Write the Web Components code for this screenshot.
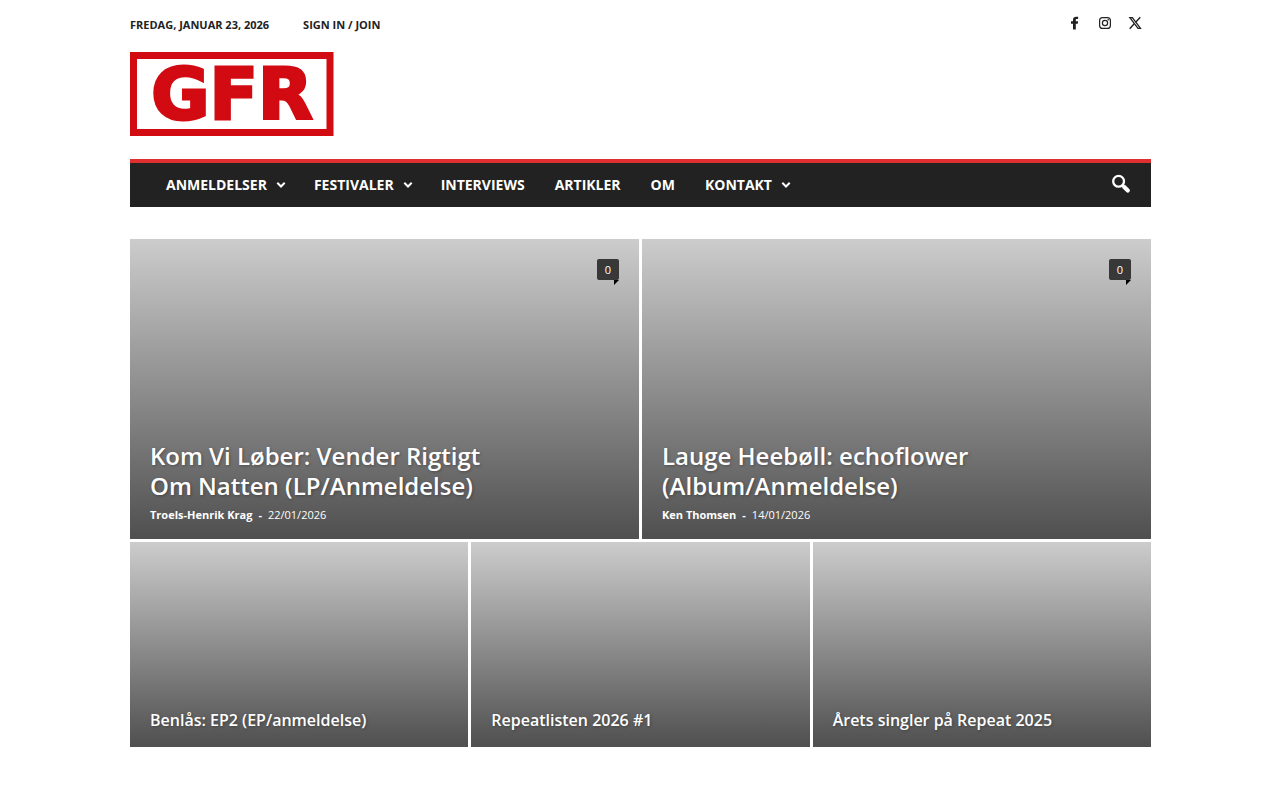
<!DOCTYPE html>
<html lang="da">
<head>
<meta charset="utf-8">
<meta name="viewport" content="width=device-width, initial-scale=1">
<title>GFR</title>
<style>
  body {
    margin: 0;
    background: #fff;
    color: #222;
    font-family: "Open Sans", "Noto Sans", sans-serif;
  }
</style>
</head>
<body>
<gfr-page>
  <gfr-topbar slot="header" date="Fredag, januar 23, 2026"></gfr-topbar>
  <gfr-logo slot="header"></gfr-logo>
  <gfr-nav slot="header">
    <gfr-nav-item sub>Anmeldelser</gfr-nav-item>
    <gfr-nav-item sub>Festivaler</gfr-nav-item>
    <gfr-nav-item>Interviews</gfr-nav-item>
    <gfr-nav-item>Artikler</gfr-nav-item>
    <gfr-nav-item>Om</gfr-nav-item>
    <gfr-nav-item sub>Kontakt</gfr-nav-item>
  </gfr-nav>
  <gfr-grid>
    <gfr-story large comments="0" author="Troels-Henrik Krag" date="22/01/2026">Kom Vi Løber: Vender Rigtigt Om Natten (LP/Anmeldelse)</gfr-story>
    <gfr-story large comments="0" author="Ken Thomsen" date="14/01/2026">Lauge Heebøll: echoflower (Album/Anmeldelse)</gfr-story>
    <gfr-story>Benlås: EP2 (EP/anmeldelse)</gfr-story>
    <gfr-story>Repeatlisten 2026 #1</gfr-story>
    <gfr-story>Årets singler på Repeat 2025</gfr-story>
  </gfr-grid>
</gfr-page>

<script>
// Small base class: every element renders one open shadow root
class GfrElement extends HTMLElement {
  constructor() {
    super();
    this.attachShadow({ mode: 'open' });
  }

  connectedCallback() {
    this.shadowRoot.innerHTML = this.render();
  }
}

class GfrPage extends GfrElement {
  render() {
    return `
      <style>
        :host {
          display: block;
          max-width: 1021px;
          margin: 0 auto;
          padding-left: 1px;
        }
        main { padding: 32px 0 48px; }
      </style>
      <header><slot name="header"></slot></header>
      <main><slot></slot></main>
    `;
  }
}

class GfrTopbar extends GfrElement {
  render() {
    return `
      <style>
        :host {
          display: flex;
          justify-content: space-between;
          align-items: center;
          height: 48px;
          font-size: 11px;
          font-weight: 700;
          line-height: 20px;
          text-transform: uppercase;
        }
        a { color: #222; text-decoration: none; }
        .info { display: flex; gap: 34px; padding-top: 2px; }
        .social { display: flex; gap: 10px; padding: 0 6px 2px 0; }
        .social a { display: block; width: 20px; height: 20px; }
        svg { display: block; width: 20px; height: 20px; }
      </style>
      <div class="info">
        <span>${this.getAttribute('date')}</span>
        <a href="#login">Sign in / Join</a>
      </div>
      <nav class="social" aria-label="Social">
        <a href="#facebook" aria-label="Facebook">
          <svg viewBox="0 0 20 20" fill="#222"><path d="M8 16.500V10.800H6V8.200h2V6.700C8 4.700 9.200 3.700 11.200 3.700c.8 0 1.500.1 1.900.1V6.100H11.900c-.9 0-1.100.4-1.100 1v1.100h2.300l-.3 2.600h-2v5.700z"/></svg>
        </a>
        <a href="#instagram" aria-label="Instagram">
          <svg viewBox="0 0 20 20" fill="none" stroke="#222" stroke-width="1.200"><rect x="4.600" y="4.600" width="10.800" height="10.800" rx="3"/><circle cx="10" cy="10" r="2.600"/><circle cx="13.200" cy="6.800" r=".8" fill="#222" stroke="none"/></svg>
        </a>
        <a href="#x" aria-label="X">
          <svg viewBox="0 0 20 20" fill="none" stroke="#222"><path d="M4.900 4.600h2.500l8.100 10.800h-2.500z" stroke-width="1.300"/><path d="M15.300 4.200l-4.700 5M9.200 10.800L4.700 15.800" stroke-width="1.400"/></svg>
        </a>
      </nav>
    `;
  }
}

class GfrLogo extends GfrElement {
  render() {
    return `
      <style>
        :host { display: block; padding: 4px 0 23px; }
        a { display: block; width: 204px; }
        svg { display: block; width: 204px; height: 84px; }
        text { font: 700 71px "DejaVu Sans", sans-serif; }
      </style>
      <a href="#home" aria-label="GFR">
        <svg viewBox="0 0 204 84">
          <rect x="3.500" y="3.500" width="196.500" height="77" fill="#fff" stroke="#d20a11" stroke-width="7"/>
          <text x="102" y="67" text-anchor="middle" fill="#d20a11" stroke="#d20a11" stroke-width="3">GFR</text>
        </svg>
      </a>
    `;
  }
}

class GfrNav extends GfrElement {
  render() {
    return `
      <style>
        :host {
          display: flex;
          justify-content: space-between;
          border-top: 4px solid #de3030;
          background: #222;
          padding: 0 10px 0 21px;
        }
        nav { display: flex; flex-wrap: wrap; }
        button {
          width: 40px;
          height: 42px;
          padding: 0 10px;
          border: 0;
          background: none;
          cursor: pointer;
        }
        svg { display: block; width: 20px; height: 20px; }
      </style>
      <nav aria-label="Menu"><slot></slot></nav>
      <button type="button" aria-label="Search">
        <svg viewBox="0 0 20 20" fill="none" stroke="#fff"><circle cx="7.600" cy="7.300" r="5.400" stroke-width="2.300"/><path d="M11.300 11l1.700 1.700" stroke-width="2.500"/><path d="M13.200 12.900l3.600 3.600" stroke-width="4.200" stroke-linecap="round"/></svg>
      </button>
    `;
  }
}

class GfrNavItem extends GfrElement {
  render() {
    const arrow = this.hasAttribute('sub')
      ? '<svg viewBox="0 0 10 10"><path d="M1.300 2.800L5 6.500l3.700-3.700" fill="none" stroke="#fff" stroke-width="2"/></svg>'
      : '';

    return `
      <style>
        :host { display: block; }
        a {
          display: flex;
          align-items: center;
          gap: 9px;
          padding: 0 15px;
          color: #fff;
          font-size: 14px;
          font-weight: 700;
          line-height: 44px;
          text-decoration: none;
          text-transform: uppercase;
        }
        :host([sub]) a { padding-right: 13px; }
        svg { width: 10px; height: 10px; }
      </style>
      <a href="#menu"><slot></slot>${arrow}</a>
    `;
  }
}

class GfrGrid extends GfrElement {
  render() {
    return `
      <style>
        :host {
          display: grid;
          grid-template-columns: repeat(6, 1fr);
          gap: 3px;
        }
        ::slotted(*) { grid-column: span 2; }
        ::slotted([large]) { grid-column: span 3; }
      </style>
      <slot></slot>
    `;
  }
}

class GfrStory extends GfrElement {
  render() {
    const author = this.getAttribute('author');
    const comments = this.getAttribute('comments');

    return `
      <style>
        :host {
          position: relative;
          display: flex;
          flex-direction: column;
          justify-content: flex-end;
          box-sizing: border-box;
          min-height: 205px;
          padding: 0 20px 14px;
          background: linear-gradient(to bottom, rgba(0,0,0,0.2), rgba(0,0,0,0.69));
          color: #fff;
        }
        :host([large]) { min-height: 300px; }
        a { color: inherit; text-decoration: none; }
        h3 {
          margin: 0;
          max-width: 375px;
          font-size: 16px;
          font-weight: 600;
          line-height: 26px;
          text-shadow: 1px 1px 3px rgba(0,0,0,0.3);
        }
        :host([large]) h3 { font-size: 24px; line-height: 30px; }
        .meta {
          display: flex;
          gap: 6px;
          padding-top: 4px;
          font-size: 11px;
          line-height: 20px;
        }
        .meta a, .meta span { font-weight: 700; }

        /* comment count bubble */
        .comments {
          position: absolute;
          top: 20px;
          right: 20px;
          min-width: 22px;
          border-radius: 2px;
          background: #383838;
          font-size: 11px;
          line-height: 21px;
          text-align: center;
        }
        .comments::after {
          content: "";
          position: absolute;
          top: 100%;
          right: 0;
          border-top: 5px solid #000;
          border-right: 5px solid transparent;
        }
      </style>
      ${comments !== null ? `<a class="comments" href="#comments">${comments}</a>` : ''}
      <h3><a href="#story"><slot></slot></a></h3>
      ${author ? `<div class="meta"><a href="#author">${author}</a><span>-</span><time>${this.getAttribute('date')}</time></div>` : ''}
    `;
  }
}

customElements.define('gfr-page', GfrPage);
customElements.define('gfr-topbar', GfrTopbar);
customElements.define('gfr-logo', GfrLogo);
customElements.define('gfr-nav', GfrNav);
customElements.define('gfr-nav-item', GfrNavItem);
customElements.define('gfr-grid', GfrGrid);
customElements.define('gfr-story', GfrStory);
</script>
</body>
</html>
